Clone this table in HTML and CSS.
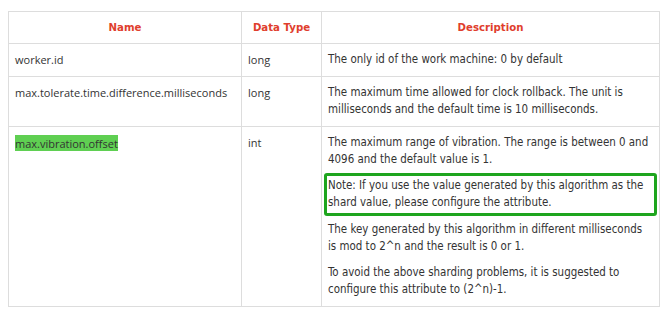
FILE: index.html
```html
<!DOCTYPE html>
<html lang="en">
<head>
<meta charset="utf-8">
<title>Snowflake key generator properties</title>
<link rel="stylesheet" href="styles.css">
</head>
<body>
<table class="params">
  <colgroup>
    <col class="col-name">
    <col class="col-type">
    <col class="col-desc">
  </colgroup>
  <thead>
    <tr>
      <th>Name</th>
      <th>Data Type</th>
      <th>Description</th>
    </tr>
  </thead>
  <tbody>
    <tr>
      <td class="key">worker.id</td>
      <td class="key">long</td>
      <td class="desc"><p>The only id of the work machine: 0 by default</p></td>
    </tr>
    <tr>
      <td class="key">max.tolerate.time.difference.milliseconds</td>
      <td class="key">long</td>
      <td class="desc"><p>The maximum time allowed for clock rollback. The unit is milliseconds and the default time is 10 milliseconds.</p></td>
    </tr>
    <tr>
      <td class="key"><span class="mark">max.vibration.offset</span></td>
      <td class="key">int</td>
      <td class="desc">
        <p>The maximum range of vibration. The range is between 0 and 4096 and the default value is 1.</p>
        <p class="note">Note: If you use the value generated by this algorithm as the shard value, please configure the attribute.</p>
        <p>The key generated by this algorithm in different milliseconds is mod to 2^n and the result is 0 or 1.</p>
        <p>To avoid the above sharding problems, it is suggested to configure this attribute to (2^n)-1.</p>
      </td>
    </tr>
  </tbody>
</table>
</body>
</html>
```

FILE: styles.css
```css
body {
  margin: 0;
  padding: 11px 8px;
  background: #fff;
}

.params {
  border-collapse: collapse;
  table-layout: fixed;
  width: 652px;
  color: #333;
}

.col-name { width: 233px; }
.col-type { width: 80px; }

.params th,
.params td {
  border: 1px solid #ddd;
  padding: 7px 6px 8px;
  vertical-align: top;
  text-align: left;
  line-height: 17px;
}

.params th {
  padding: 7px 6px;
  text-align: center;
  color: #e03e2d;
  font: bold 10.2px/17px "DejaVu Sans", sans-serif;
}

.key {
  font-family: "Open Sans", sans-serif;
  font-size: 11px;
}

.mark {
  background: #5fcf52;
  padding: 0.5px 0;
}

.desc {
  font-family: "DejaVu Sans Condensed", "DejaVu Sans", sans-serif;
  font-stretch: semi-condensed;
  font-size: 11.45px;
}

.desc p {
  margin: 0 0 9.4px;
}

.desc p:last-child {
  margin-bottom: 0;
}

/* green callout drawn around the note paragraph */
.note {
  position: relative;
}

.note::after {
  content: "";
  position: absolute;
  top: -4px;
  right: -4px;
  bottom: -5px;
  left: -4px;
  border: 3px solid #1ea51e;
  border-radius: 3px;
  pointer-events: none;
}
```
